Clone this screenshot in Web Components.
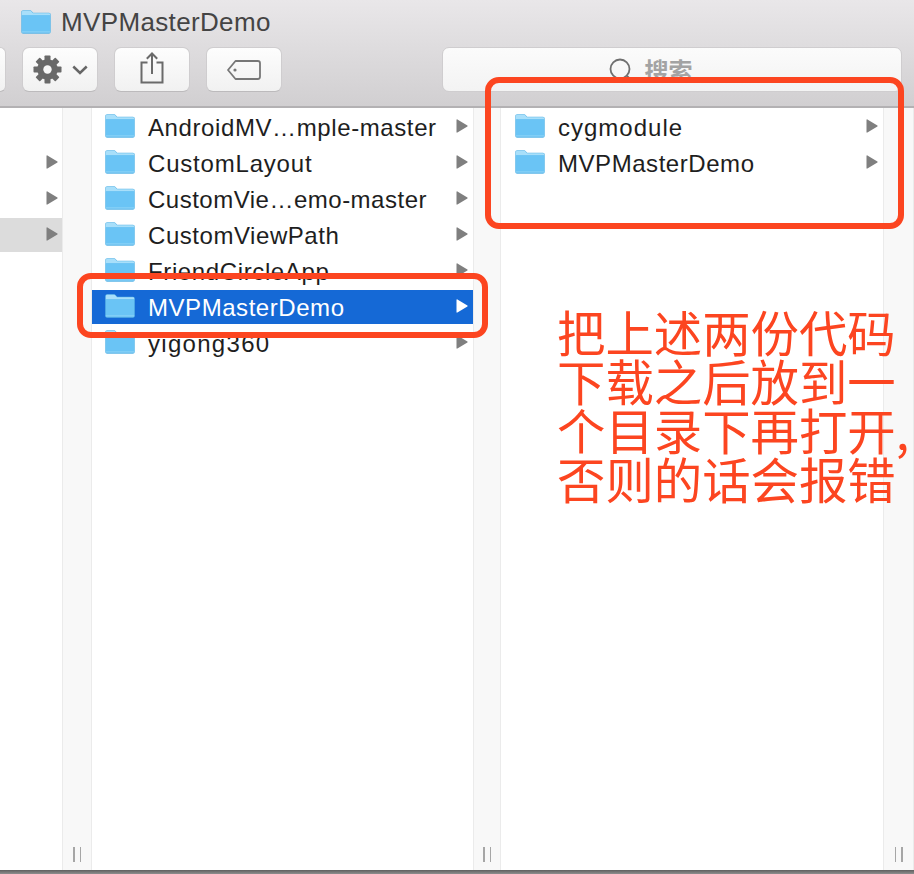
<!DOCTYPE html>
<html lang="zh-CN"><head><meta charset="utf-8"><title>MVPMasterDemo</title>
<style>
html,body{margin:0;padding:0;background:#fff}
body{width:914px;height:874px;overflow:hidden;font-family:"Liberation Sans","Noto Sans CJK SC",sans-serif}
</style></head><body>
<finder-window>
  <finder-toolbar slot="toolbar" title-text="MVPMasterDemo"></finder-toolbar>
  <finder-column slot="columns" width="62" bar="30">
    <finder-row arrow-only hidden-arrow></finder-row>
    <finder-row arrow-only></finder-row>
    <finder-row arrow-only></finder-row>
    <finder-row arrow-only parent></finder-row>
  </finder-column>
  <finder-column slot="columns" width="381" bar="28" style="--row-pad:13px">
    <finder-row style="letter-spacing:.6px">AndroidMV…mple-master</finder-row>
    <finder-row style="letter-spacing:.8px">CustomLayout</finder-row>
    <finder-row style="letter-spacing:.5px">CustomVie…emo-master</finder-row>
    <finder-row>CustomViewPath</finder-row>
    <finder-row style="letter-spacing:.62px">FriendCircleApp</finder-row>
    <finder-row selected>MVPMasterDemo</finder-row>
    <finder-row style="letter-spacing:1.3px">yigong360</finder-row>
  </finder-column>
  <finder-column slot="columns" width="382" bar="31" style="--row-pad:14px">
    <finder-row style="letter-spacing:1px">cygmodule</finder-row>
    <finder-row>MVPMasterDemo</finder-row>
  </finder-column>
  <red-box slot="overlay" style="left:485px;top:77px;width:419px;height:152px"></red-box>
  <red-box slot="overlay" style="left:77px;top:273px;width:411px;height:65px"></red-box>
  <red-note slot="overlay" style="left:557px;top:307px">把上述两份代码<br>下载之后放到一<br>个目录下再打开,<br>否则的话会报错</red-note>
</finder-window>
<script>
const FOLDER = `<svg width="30" height="24" viewBox="0 0 30 24" aria-hidden="true"><path d="M.3 2.200C.3 1 1 .3 2.200.3h6.600c1 0 1.500.4 2.200 1.100l1.200 1.300h15.700c1.200 0 1.800.7 1.800 1.800v17.300c0 1.200-.7 1.900-1.800 1.900H2.100C1 23.700.3 23 .3 21.800z" fill="#5bb5e6"/><path d="M.8 2.400C.8 1.400 1.400.8 2.300.8h6.400c.9 0 1.300.4 1.900 1l1.400 1.500h15.700c.8 0 1.500.5 1.500 1.400v.8H.8z" fill="#a8dffa"/><rect x=".8" y="5.200" width="28.400" height="17.300" rx=".6" fill="#6ac4f5"/><rect x=".8" y="21.200" width="28.400" height="1.400" fill="#85d0f7"/></svg>`;

class FinderWindow extends HTMLElement{
  constructor(){super();this.attachShadow({mode:'open'}).innerHTML=`<style>
    :host{display:flex;flex-direction:column;position:relative;width:914px;height:874px;overflow:hidden;background:#fff}
    .cols{flex:1;display:flex;min-height:0}
    .foot{height:4px;background:linear-gradient(#5f5f5f,#8e8e8e)}
  </style><slot name="toolbar"></slot><div class="cols"><slot name="columns"></slot></div><div class="foot"></div><slot name="overlay"></slot>`;}
}
class FinderToolbar extends HTMLElement{
  constructor(){super();const t=this.getAttribute('title-text')||'';this.attachShadow({mode:'open'}).innerHTML=`<style>
    :host{display:flex;flex-direction:column;box-sizing:border-box;height:108px;flex:none;background:linear-gradient(#e9e7e9,#d1cfd1);border-bottom:2px solid #b3b1b3}
    .title{display:flex;align-items:center;gap:10px;height:47px;padding:0 0 3px 21px;box-sizing:border-box;font-size:26px;color:#444;letter-spacing:.35px}
    .tools{display:flex;height:45px}
    .btn{box-sizing:border-box;width:76px;height:45px;border-radius:7px;background:linear-gradient(#fdfdfd,#f1f1f1);border:1px solid #cfcdcf;border-bottom-color:#bcbabc;display:flex;align-items:center;justify-content:center;flex:none;gap:10px}
    .stub{width:6px;border-radius:0 7px 7px 0;border-left:0;margin-right:16px}
    .gap{margin-right:16px}
    .search{box-sizing:border-box;width:460px;height:45px;margin-left:160px;padding-right:44px;border-radius:7px;background:linear-gradient(#fbfbfb,#f3f3f3);border:1px solid #cfcdcf;display:flex;align-items:center;justify-content:center;gap:11px;font:600 24px "Noto Sans CJK SC",sans-serif;color:#a3a3a3}
    svg{display:block}
  </style>
  <div class="title">${FOLDER}<span>${t}</span></div>
  <div class="tools">
    <div class="btn stub"></div>
    <div class="btn gap">
      <svg width="29" height="29" viewBox="0 0 29 29"><g fill="#696969"><circle cx="14.500" cy="14.500" r="10.300"/><rect x="11.500" y=".5" width="6" height="28" rx=".8"/><rect x="11.500" y=".5" width="6" height="28" rx=".8" transform="rotate(45 14.500 14.500)"/><rect x="11.500" y=".5" width="6" height="28" rx=".8" transform="rotate(90 14.500 14.500)"/><rect x="11.500" y=".5" width="6" height="28" rx=".8" transform="rotate(135 14.500 14.500)"/></g><circle cx="14.500" cy="14.500" r="4.200" fill="#f7f7f7"/></svg>
      <svg width="16" height="10" viewBox="0 0 16 10"><path d="M1.300 1.500 8 8l6.700-6.500" fill="none" stroke="#666" stroke-width="2.500"/></svg>
    </div>
    <div class="btn gap">
      <svg width="24" height="32" viewBox="0 0 24 32" style="margin-top:-3px"><path d="M7.500 10.500H1.500v20h21v-20h-6M12 22V1.500M6.800 6.700 12 1.500l5.200 5.200" fill="none" stroke="#6a6a6a" stroke-width="2"/></svg>
    </div>
    <div class="btn">
      <svg width="34" height="20" viewBox="0 0 34 20"><path d="M8.500 1h22.300A2.200 2.200 0 0 1 33 3.200v13.600a2.200 2.200 0 0 1-2.200 2.200H8.500L1 10z" fill="none" stroke="#777" stroke-width="1.800" stroke-linejoin="round"/><circle cx="8" cy="10" r="1.600" fill="#777"/></svg>
    </div>
    <div class="search">
      <svg width="26" height="26" viewBox="0 0 26 26"><circle cx="12" cy="12" r="9.500" fill="none" stroke="#6f6f6f" stroke-width="1.800"/><path d="m19 19 5 5" stroke="#6f6f6f" stroke-width="2"/></svg>
      <span>搜索</span>
    </div>
  </div>`;}
}
class FinderColumn extends HTMLElement{
  constructor(){super();const w=+this.getAttribute('width'),b=+this.getAttribute('bar');this.attachShadow({mode:'open'}).innerHTML=`<style>
    :host{display:flex;flex:none;height:100%;width:${w+b}px}
    .list{box-sizing:border-box;width:${w}px;flex:none;padding-top:1px;display:flex;flex-direction:column;background:#fff;overflow:hidden}
    .bar{width:${b}px;flex:none;box-sizing:border-box;background:#f8f8f8;border-left:1px solid #ebebeb;border-right:1px solid #ebebeb;display:flex;align-items:flex-end;justify-content:center;padding-bottom:8px;gap:5px}
    i{display:block;width:1.500px;height:15px;background:#a6a6a6}
  </style><div class="list"><slot></slot></div><div class="bar"><i></i><i></i></div>`;}
}
class FinderRow extends HTMLElement{
  constructor(){super();this.attachShadow({mode:'open'}).innerHTML=`<style>
    :host{display:flex;align-items:center;box-sizing:border-box;height:36px;flex:none;padding:0 5px 0 var(--row-pad,0);font-size:24px;color:#1e1e1e;white-space:nowrap;letter-spacing:.55px}
    :host([selected]){background:#1569d6;color:#fff;height:34px;margin:1px 0}
    :host([parent]){background:#dcdcdc;height:34px;margin:1px 0}
    .name{flex:1;margin-left:13px;padding-top:2px}
    :host([arrow-only]) .name,:host([arrow-only]) .f{display:none}
    :host([arrow-only]){justify-content:flex-end;padding-right:4px}
    :host([hidden-arrow]) svg.a{visibility:hidden}
    .f{margin-bottom:2px}
    svg{display:block;flex:none}
    .a{fill:#7f7f7f;margin-bottom:2px}
    :host([selected]) .a{fill:#fff}
  </style><span class="f">${FOLDER}</span><span class="name"><slot></slot></span><svg class="a" width="12" height="14" viewBox="0 0 12 14"><path d="M.5 1v12c0 .6.400.8.900.5L11.400 7.500c.4-.3.4-.7 0-1L1.400.5C.9.200.5.400.5 1z"/></svg>`;}
}
class RedBox extends HTMLElement{
  constructor(){super();this.attachShadow({mode:'open'}).innerHTML=`<style>:host{position:absolute;display:block;box-sizing:border-box;border:6px solid #fc4520;border-radius:14px;pointer-events:none}</style>`;}
}
class RedNote extends HTMLElement{
  constructor(){super();this.attachShadow({mode:'open'}).innerHTML=`<style>:host{position:absolute;display:block;font:48.400px/49px "Noto Sans CJK SC",sans-serif;color:#fc4520;white-space:nowrap}</style><slot></slot>`;}
}
customElements.define('finder-window',FinderWindow);
customElements.define('finder-toolbar',FinderToolbar);
customElements.define('finder-column',FinderColumn);
customElements.define('finder-row',FinderRow);
customElements.define('red-box',RedBox);
customElements.define('red-note',RedNote);
</script>
</body></html>
